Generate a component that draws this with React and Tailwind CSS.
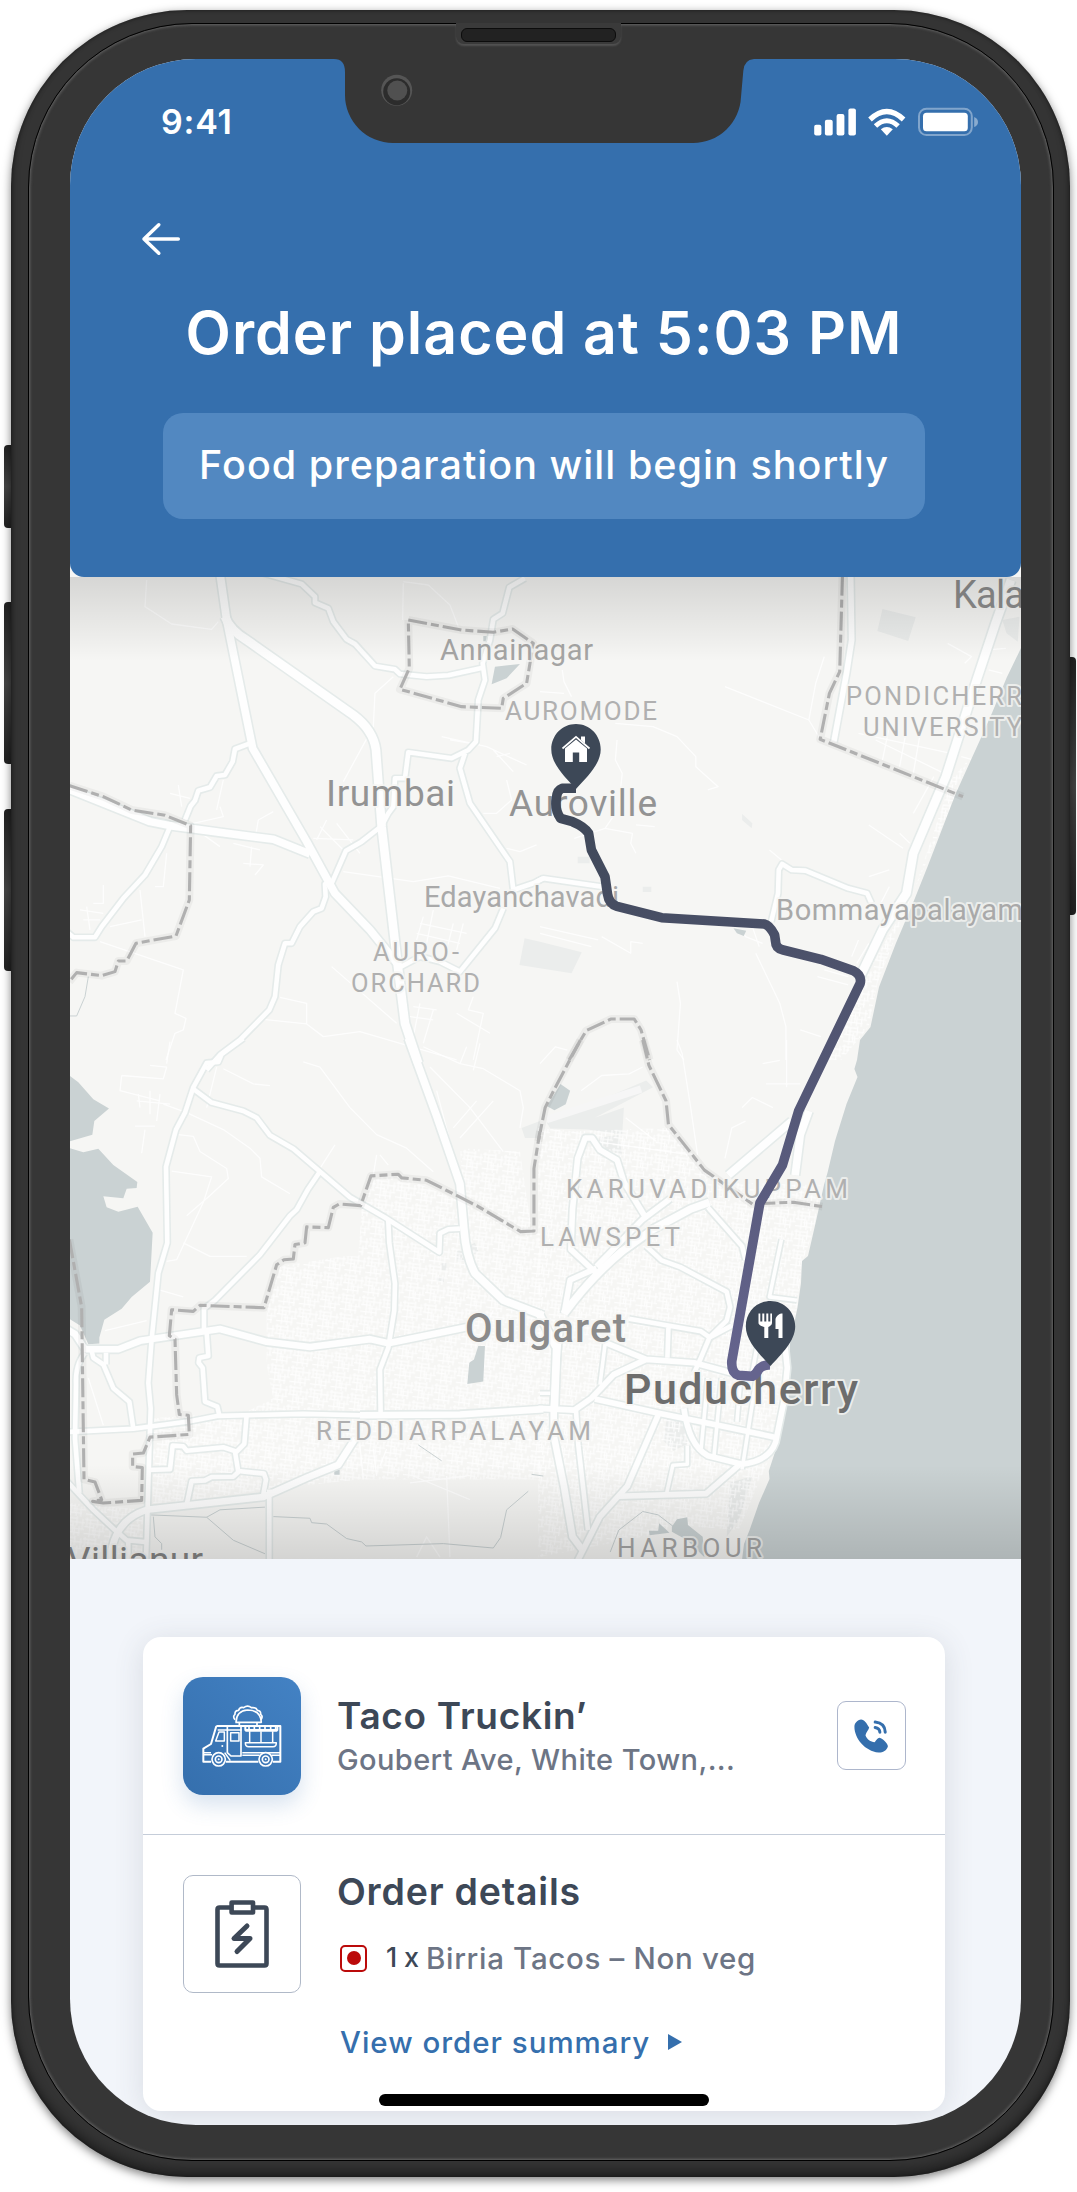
import React from "react";

/* ---------- Map data: four tiles, each with its own drawing units ---------- */

const TILES = {
  nw: "translate(60 560) scale(0.3333 0.3333)",
  ne: "translate(540 560) scale(0.3425 0.3333)",
  sw: "translate(60 1040) scale(0.3333 0.338)",
  se: "translate(540 1040) scale(0.3425 0.338)",
};

// [tile, width, path]
const ROADS = [
  // north west
  ["nw", 8, "M480 40 L500 180 L578 565 L740 845 L825 1000 L930 1110 L1015 1215"],
  ["nw", 9, "M495 170 Q510 210 560 240 L880 465 Q940 510 948 570 L965 800 L1010 1190 L1035 1390 L1075 1510"],
  ["nw", 5, "M610 40 L725 72 L765 110 L765 128 L805 145 L820 185 L860 238 L885 252 L945 318 L1005 328 L1020 342 L1100 350 L1165 346 L1265 324"],
  ["nw", 5, "M1395 55 L1348 82 L1328 160 L1300 178 L1290 240 L1268 310 L1275 360 L1255 420 L1248 545 L1225 570 L1175 595 L1045 577 L1035 655 L1005 655 L1000 740 L985 760 L965 798 L905 845 L858 872 L815 970 L795 972 L797 1010 L785 1045 L760 1055 L720 1100 L695 1150 L675 1150 L655 1215 L645 1310 L628 1350 L540 1440 L480 1485 L440 1530"],
  ["nw", 5, "M1215 580 L1200 625 L1230 730 L1350 905 L1360 990 L1420 970 L1450 955"],
  ["nw", 5, "M1330 1045 L1305 1105 L1200 1235 L1140 1205 L1080 1190 L1020 1222"],
  ["nw", 5, "M570 550 L525 567 L518 605 L495 645 L470 648 L450 682 L415 692 L405 722 L392 738 L375 780"],
  ["nw", 8, "M20 685 L270 785 L330 797 L500 820 L640 838 L750 882"],
  ["nw", 5, "M330 800 L305 860 L255 945 L190 1015 L125 1100 L105 1132 L40 1132 L20 1115"],
  // north east
  ["ne", 6, "M907 40 L910 240 L895 340 L858 545"],
  ["ne", 9, "M1375 60 L1330 190 L1275 360 L1185 650 L1090 880 L1070 1000 L1000 1110 L930 1260"],
  ["ne", 5, "M675 1085 L695 1000 L697 930 L707 912 L735 930 L775 932 L900 985 L955 1000 L968 1030"],
  ["ne", 5, "M-10 965 L10 955 L180 980 L200 988"],
  // south west
  ["sw", 5, "M550 -5 L485 42 L475 65 L440 68 L400 140 L375 215 L348 265 L318 375 L322 600 L295 690 L275 885 L265 1015 L272 1090 L258 1540"],
  ["sw", 5, "M400 145 L455 185 L550 210 L590 230 L630 282 L700 322 L870 465 L975 525 L1138 628 L1140 572 L1165 560 L1200 558"],
  ["sw", 5, "M778 392 L745 440 L710 502 L690 520 L600 635 L465 770 L432 795 L432 860"],
  ["sw", 8, "M1045 -5 L1130 225 L1200 425 L1212 560 Q1218 640 1245 690 L1330 770 L1450 815"],
  ["sw", 7, "M20 855 L45 870 L75 915 L175 915 L240 890 L480 855 L620 893 L750 908 L930 885 L985 897 L1220 850"],
  ["sw", 5, "M985 535 L988 600 L1005 720 L1003 800 L985 910 L960 975 L962 1105"],
  ["sw", 5, "M20 1160 L220 1150 L390 1128 L475 1112 L730 1106 L900 1110"],
  ["sw", 7, "M900 1110 L1200 1108 L1450 1092"],
  ["sw", 5, "M440 865 L445 935 L418 940 L416 955 L428 970 L435 1070 L472 1085 L478 1110"],
  ["sw", 5, "M95 920 L100 940 L130 960 L160 1030 L208 1070 L220 1150 M138 925 L138 960"],
  ["sw", 5, "M75 925 Q45 960 48 1020 L45 1180 L58 1340"],
  ["sw", 5, "M20 1305 L100 1390 L165 1450 L200 1480 L255 1485 M205 1480 L205 1540"],
  ["sw", 7, "M150 1540 Q160 1420 260 1390 L610 1352 L740 1295 L835 1257 L885 1180"],
  ["sw", 5, "M560 1110 L553 1195 L530 1218 L490 1205 L380 1215 L370 1202 L338 1200 L330 1270 L262 1272"],
  ["sw", 5, "M525 1218 L535 1278 L520 1292 L455 1293 L435 1303 L395 1305 L380 1375 M535 1275 L612 1283 L618 1300 L610 1345 M628 1330 L628 1540"],
  // south east
  ["se", 8, "M-5 805 L45 905 L50 870 L42 1090 M70 810 Q150 700 240 625 L330 560 L440 500 L495 480"],
  ["se", 6, "M70 810 L88 710 L165 675 M165 690 L90 620 L95 500 L110 350 L132 290 L152 290 L175 325 L225 355 L245 420 L305 520 M165 670 L300 530 L380 470"],
  ["se", 8, "M550 400 L735 240 M785 210 L760 280 L745 400"],
  ["se", 5, "M490 495 L590 610 L600 650 M310 610 L355 652 L410 672 L545 745 L555 790 L545 830 L495 880 L470 940 L450 985"],
  ["se", 7, "M60 830 L50 920 L40 1095 L40 1170 L70 1320 L95 1470 L125 1510"],
  ["se", 5, "M105 1095 L112 1200 L140 1450"],
  ["se", 5, "M260 825 L470 862 L495 880 L560 845 M375 850 L372 940"],
  ["se", 6, "M190 895 L310 945 L450 955 L560 985 M310 945 L215 990 L150 1060 L100 1095 L-5 1090"],
  ["se", 6, "M160 1062 L350 1105 L520 1140 L685 1175"],
  ["se", 6, "M345 1110 L255 1320 L175 1410 L110 1540"],
  ["se", 6, "M230 1350 L485 1342 L590 1250"],
  ["se", 6, "M420 1090 Q435 1200 490 1230 L590 1255 Q670 1245 688 1190 L712 1070 L722 970 L715 900"],
  ["se", 4, "M430 1200 L430 1255 L388 1258 L370 1340 M490 1000 L470 1215 M530 1000 L508 1230 M630 1010 L590 1270 M585 1010 L575 1130"],
  ["se", 4, "M705 590 L670 760 L750 770 M640 870 L615 1010 M190 900 L175 1020 M0 1045 L30 1045"],
];

const BOUNDARIES = [
  ["nw", "M1045 180 L1205 210 L1300 217 L1358 207 L1420 250 L1400 370 L1330 415 L1325 445 L1205 440 L1020 388 L1048 325 L1045 180"],
  ["nw", "M28 677 L130 710 L215 750 L315 766 L392 797 L388 1020 L348 1128 L228 1150 L200 1203 L175 1203 L165 1235 L125 1247 L50 1238 L28 1265"],
  ["ne", "M883 50 L875 335 L845 400 L818 538 L1235 710"],
  ["ne", "M85 1500 L135 1412 L208 1377 L275 1377 L295 1410 L320 1500"],
  ["sw", "M28 590 L65 790 L72 1300 L105 1308 L125 1360 L98 1365 L130 1370 L245 1362 L247 1265 L218 1262 L218 1225 L250 1222 L270 1175 L388 1167 L385 1110 L358 1108 L350 1050 L345 885 L328 875 L335 798 L400 803 L420 785 L612 792 L650 665 L672 650 L700 648 L705 605 L735 600 L740 553 L805 555 L820 495 L838 485 L902 490 L933 402 L1015 397 L1025 408 L1100 415 L1250 490 L1382 567 L1422 565 L1422 380 L1440 270"],
  ["se", "M118 0 L50 130 L15 200 L-5 300"],
  ["se", "M300 0 L318 75 L368 180 L375 250 L480 385 L620 485 L740 480 L825 493"],
];

const LAKES = [
  ["nw", "M1305 320 L1380 312 L1340 355 L1295 373 Z M1270 228 h14 v16 h-14 Z"],
  ["sw", "M28 105 L55 125 L100 175 L147 203 L103 240 L97 280 L28 300 Z"],
  ["sw", "M28 320 L70 332 L115 322 L160 370 L232 420 L230 438 L200 440 L190 468 L130 462 L140 495 L175 508 L233 493 L278 570 L270 715 L215 760 L185 795 L133 828 L118 880 L118 898 L85 900 L60 845 L28 825 Z"],
  ["sw", "M1255 905 L1275 905 L1270 1010 L1222 1018 L1228 955 L1242 945 Z M823 1272 h16 v14 h-16 Z"],
  ["se", "M60 130 L88 150 L75 190 L42 208 L20 195 Z"],
  ["se", "M385 1440 L400 1418 L430 1412 L432 1435 L475 1470 L480 1530 L430 1480 L385 1455 Z M318 1452 L345 1452 L348 1430 L378 1458 L320 1465 Z"],
  ["ne", "M565 1105 L602 1112 L595 1128 L575 1120 Z"],
];

const GROUNDS = [
  ["ne", "M1000 147 L1097 172 L1075 243 L985 213 Z M1350 180 L1400 170 L1395 245 L1362 220 Z"],
  ["ne", "M0 1145 L122 1177 L92 1240 L-60 1215 L-45 1135 Z M590 762 L620 790 L618 805 L590 780 Z M110 890 h35 v20 h-35 Z M300 980 h25 v16 h-25 Z"],
  ["se", "M20 245 L310 120 L330 140 L160 230 L245 200 L240 280 L140 265 L30 262 Z"],
  ["se", "M370 1120 L415 1120 L430 1195 L390 1215 L360 1185 Z M555 1310 L620 1290 L580 1420 L545 1470 Z M170 290 L230 280 L240 340 L180 320 Z"],
  ["sw", "M1190 625 L1245 600 L1255 625 L1215 655 L1190 655 Z M1145 660 h14 v22 h-14 Z M1130 702 h22 v14 h-22 Z M1385 260 L1440 240 L1440 290 L1395 290 Z"],
];

const LANES = [
  ["nw", "M260 60 L255 140 L335 192 L455 208 L475 185 M1030 65 L1105 75 L1170 135 L1195 200 M1030 70 L1028 180 M1000 350 L945 400 L940 500 L850 665 M850 935 L1060 965 L1165 948 L1320 985"],
  ["nw", "M120 1145 L370 1230 L345 1360 L378 1375 L370 1410 L345 1420 L318 1500 M610 1378 L740 1392 L740 1330 L660 1312 M740 1392 L790 1430 L900 1415 L1190 1500 M815 1220 L1010 1390"],
  ["nw", "M330 700 L390 715 M355 675 L365 740 M400 790 L490 770 L480 740 M410 810 L480 860 M490 660 L470 750 M520 850 L600 870 M585 840 L595 780 L640 755 M550 910 L610 915 L585 945 M575 860 L570 920"],
  ["nw", "M760 835 L880 840 M780 800 L850 870 M800 780 L770 840 M830 790 L900 880 M60 1050 L130 1060 M70 1080 L120 1080 M80 1040 L90 1110 M130 975 L130 1030 L100 1030 M150 1100 L245 1080 M240 990 L255 1130 M320 880 L310 980 L285 980"],
  ["nw", "M1145 530 L1280 560 L1400 615 M1170 540 L1260 555 M1300 570 L1360 635 M1310 590 L1350 580 M1270 760 L1310 760 L1355 720 L1340 660 M1340 865 L1380 875 L1430 855"],
  ["nw", "M1080 1090 L1220 1120 M1070 1120 L1200 1150 M1090 1070 L1070 1140 M1120 1050 L1100 1150 M1180 1090 L1160 1170 M1210 1090 L1190 1170 M1060 1340 L1130 1350 M1050 1370 L1120 1380 M1080 1330 L1060 1430 M1120 1350 L1090 1450 M1190 1360 L1290 1420 M1240 1310 L1225 1350 L1270 1360 L1240 1500"],
  ["ne", "M65 330 L70 365 L92 410 M0 395 L70 400 M830 290 L805 370 L785 480 L820 540 M540 380 L650 425 L785 480 M220 490 L330 500 L400 530 L455 590 L455 620 L520 680 L490 690 M225 540 L220 600 L240 640 L230 740"],
  ["ne", "M100 835 L190 805 L270 820 L265 850 L280 880 M190 805 L220 760 M280 795 L335 800 M670 870 L705 900 M960 795 L1060 865 M1050 820 L1080 850 M400 1265 L410 1330 L400 1470 L420 1500 M630 1180 L700 1330 L718 1400 L718 1500"],
  ["ne", "M0 1100 L170 1140 M0 1120 L150 1160 M180 1130 L265 1180 L265 1145 L300 1150 M590 1110 L600 1130 L650 1150 M620 1100 L640 1160 M810 1250 L900 1275 M830 1230 L900 1250 M910 1190 L930 1140 M925 1210 L960 1150 M990 1040 L1020 980 M960 950 L1020 930"],
  ["ne", "M930 520 L1200 580 M980 540 L1180 640 M1020 500 L1000 600 M1070 510 L1050 620 M1110 520 L1090 640 M1190 250 L1260 290 L1240 310 M1300 270 L1360 265 M1310 330 L1350 340 M1090 760 L1150 650 M1130 740 L1180 660 M1230 590 L1265 600 M760 1410 L820 1430"],
  ["sw", "M330 5 L320 70 M185 105 L310 115 L320 80 L270 75 M185 105 L180 150 L300 180 M230 180 L330 190 M235 160 L240 200 M270 150 L270 220 M300 160 L290 240 M225 255 L285 255 M255 265 L245 335 M310 190 L380 215 L490 265 L570 320 L600 350 L605 405 L690 455"],
  ["sw", "M470 80 L440 200 M490 85 L580 130 L630 135 M355 280 L400 285 L420 330 L500 380 L505 410 L450 460 L380 520 M335 388 L455 405 L430 480 L350 650 L320 655 M370 600 L450 640 L560 640 M730 65 L780 80 L870 200 L950 280 L1040 320 L1120 390"],
  ["sw", "M1090 20 L1200 70 L1270 85 L1380 150 L1390 200 L1380 260 M1220 20 L1200 70 M1260 10 L1240 90 M1110 80 L1230 200 L1330 330 M1130 150 L1170 300 M1180 260 L1250 180 M1200 290 L1300 180 M825 310 L780 380 M950 340 L940 400 M960 340 L985 370 M300 740 L370 760 M135 860 L260 830 M85 1000 L130 1140"],
  ["sw", "M1060 1290 L1230 1360 M1050 1310 L1220 1290 M1160 1290 L1170 1530 M900 1200 L910 1300 M940 1210 L950 1290 M980 1210 L960 1260 M1070 1530 L1100 1470 L1140 1530 M1300 800 L1250 900"],
  ["se", "M0 70 L45 20 L80 30 M120 150 L180 105 L260 100 L300 80 M400 0 L415 40 L440 200 L460 340 M540 350 L560 260 L600 240 M650 70 L700 60 M720 0 L720 140 M660 130 L760 130 M590 200 L620 170 L680 200 M160 300 L440 340 M250 230 L340 300"],
];

const CREEKS = [
  ["sw", "M270 1405 L440 1412 L520 1480 L615 1520 M440 1412 L480 1390 L615 1382 M640 1410 L750 1415 L755 1428 L800 1432 L860 1475 L905 1485 L918 1497 L1150 1490 L1300 1503 L1322 1472 L1340 1390 L1405 1335 M280 1410 L285 1470 L305 1490 L305 1508 M1075 1198 L1145 1245 M1415 1285 L1450 1290"],
  ["se", "M205 1515 L230 1450 L300 1395 L345 1405 L390 1440"],
  ["nw", "M85 1250 L75 1310 L50 1368 L30 1368"],
];

const URBAN = [
  ["sw", "M620 790 L660 670 L850 640 L895 640 L905 500 L935 410 L1015 400 L1230 490 L1440 560 L1440 1300 L900 1300 L620 1330 L340 1370 L280 1370 L270 1120 L560 1100 L640 1060 L620 960 Z M1200 320 L1380 330 L1415 560 L1390 560 L1210 460 Z M28 1370 L250 1390 L250 1530 L28 1530 Z"],
  ["se", "M-5 260 L100 270 L375 260 L520 420 L820 430 L800 560 L765 660 L740 880 L725 1000 L690 1190 L660 1260 L580 1450 L450 1440 L-5 1530 Z"],
  ["ne", "M930 1300 L960 1230 L1090 1000 L1200 660 L1250 600 L1200 740 L1080 1020 L985 1270 L960 1400 L880 1500 L830 1500 Z"],
];

const ROUTE =
  "M576 788.3 L562.3 788.3 Q557 790 556.4 798.3 Q554.4 810 560.6 818.3 L572.5 821.7 Q584.5 826.7 588.6 833.3 L591.4 850 L605 876.7 L607.5 894 Q609 904 617 906.3 L661.6 917.7 L764.3 924 Q769.5 925 774.6 935 L775.6 941.7 Q775.6 948.3 783.2 950 L820.9 959.3 L853.4 970.7 Q862 975 860.2 983.3 L798.6 1111 L782.5 1165 L759.9 1203 L731.8 1361 Q731 1373 738.7 1375.3 L752.4 1376.3 Q755.8 1374.6 758.5 1369.6 Q762.6 1364.5 770.2 1365";

// [text, x, baseline, drawn length, size, colour, weight]
const LABELS = [
  ["Annainagar", 440, 660, 153, 29, "#a5a5a4", 400],
  ["AUROMODE", 505, 720, 152, 26, "#b0b0b0", 400],
  ["Irumbai", 326, 806, 129, 37, "#939393", 400],
  ["Auroville", 509, 816, 148, 37, "#939393", 400],
  ["Edayanchavadi", 424, 906.5, 195, 29, "#a9a9a9", 400],
  ["AURO-", 373, 961, 86, 25.5, "#b0b0b0", 400],
  ["ORCHARD", 351, 992, 129, 25.5, "#b0b0b0", 400],
  ["Bommayapalayam", 776, 920, 247, 29, "#a9a9a9", 400],
  ["PONDICHERR", 846, 704.5, 176, 25.5, "#b0b0b0", 400],
  ["UNIVERSITY", 863, 736, 159, 25.5, "#b0b0b0", 400],
  ["Kala", 953, 608, 72, 38, "#8d8d8d", 400],
  ["KARUVADIKUPPAM", 566, 1198, 282, 26, "#b0b0b0", 400],
  ["LAWSPET", 540, 1246, 140, 26, "#b0b0b0", 400],
  ["Oulgaret", 465, 1341.5, 161, 40, "#8b8b8b", 500],
  ["Puducherry", 624, 1403.5, 234, 43, "#6d6d6d", 500],
  ["REDDIARPALAYAM", 316, 1440, 275, 26, "#b0b0b0", 400],
  ["HARBOUR", 617, 1556.5, 145, 26, "#a5a5a5", 400],
  ["Villianur", 67, 1572.5, 136, 37, "#858585", 400],
];

function Strokes({ items, color, width, opacity = 1, dash, extra = 0 }) {
  return items.map((item, i) => {
    const d = item[item.length - 1];
    const w = item.length === 3 ? item[1] + extra : width;
    return (
      <g key={i} transform={TILES[item[0]]}>
        <path
          d={d}
          fill="none"
          stroke={color}
          strokeWidth={w}
          strokeOpacity={opacity}
          strokeDasharray={dash}
          strokeLinejoin="round"
          vectorEffect="non-scaling-stroke"
        />
      </g>
    );
  });
}

function Areas({ items, fill }) {
  return items.map(([tile, d], i) => (
    <g key={i} transform={TILES[tile]}>
      <path d={d} fill={fill} />
    </g>
  ));
}

function Pin({ x, y, children }) {
  return (
    <g transform={`translate(${x} ${y})`}>
      <path d="M0 0 C13.600 0 24.700 11 24.700 25.500 C24.700 40 11 53 0 65 C-11 53 -24.700 40 -24.700 25.500 C-24.700 11 -13.600 0 0 0 Z" fill="#3d4857" />
      {children}
    </g>
  );
}

function DeliveryMap() {
  return (
    <svg viewBox="70 563 951 996" className="block h-full w-full">
      <defs>
        <linearGradient id="route" gradientUnits="userSpaceOnUse" x1="600" y1="800" x2="740" y2="1370">
          <stop offset="0" stopColor="#3f4858" />
          <stop offset="1" stopColor="#65648e" />
        </linearGradient>
        <linearGradient id="shadeTop" x1="0" y1="0" x2="0" y2="1">
          <stop offset="0" stopColor="#000" stopOpacity="0.13" />
          <stop offset="1" stopColor="#000" stopOpacity="0" />
        </linearGradient>
        <linearGradient id="shadeBottom" x1="0" y1="0" x2="0" y2="1">
          <stop offset="0" stopColor="#000" stopOpacity="0" />
          <stop offset="1" stopColor="#000" stopOpacity="0.14" />
        </linearGradient>
        <pattern id="streets" width="62" height="58" patternUnits="userSpaceOnUse" patternTransform="rotate(7)">
          <path
            d="M0 6 H40 M10 17 H62 M0 28 H30 M22 37 H62 M0 48 H50 M6 0 V30 M17 6 V58 M27 20 V48 M38 0 V28 M47 28 V58 M56 6 V37 M33 28 V58"
            fill="none"
            stroke="#fff"
            strokeWidth="3.4"
            strokeOpacity="0.85"
          />
        </pattern>
      </defs>
      <rect x="70" y="560" width="951" height="1000" fill="#f6f6f4" />
      <Areas items={GROUNDS} fill="#ebedec" />
      <Areas items={URBAN} fill="url(#streets)" />
      <Strokes items={LANES} color="#fff" width={1.3} opacity={0.8} />
      <path
        d="M1022 646 L1006.500 678 L992 713 L980 740 L956 793 L927 868 L913 903 L896 943 L879 987 L870.500 1027 L860 1040 L857 1060 L854.400 1069 L857.500 1077 L846.500 1104 L835 1141 L827.700 1172 L824 1185 L815.700 1222.500 L808 1256 L802 1261 L801 1283 L797.600 1307 L790 1344 L790 1373 L784 1408 L776 1449 L768.800 1471 L769.500 1479 L759 1503 L749.600 1530 L744 1544 L742 1560 L1022 1560 Z"
        fill="#cad2d3"
      />
      <Areas items={LAKES} fill="#cad2d3" />
      <Strokes items={CREEKS} color="#cad2d3" width={1} />
      <Strokes items={ROADS} color="#e5ebea" extra={2.8} />
      <Strokes items={ROADS} color="#fefefe" extra={-0.4} />
      <g transform={TILES.se}>
        <path d="M20 235 L295 145" stroke="#f6f6f6" strokeWidth="22" />
      </g>
      <Strokes items={BOUNDARIES} color="#000" width={8} opacity={0.04} />
      <Strokes items={BOUNDARIES} color="#b0b0b0" width={3.1} dash="19 4 8 4" />
      <g fontFamily="Roboto, sans-serif">
        {LABELS.map(([text, x, y, len, size, color, weight]) => (
          <text
            key={text}
            x={x}
            y={y}
            textLength={len}
            lengthAdjust="spacing"
            fontSize={size}
            fontWeight={weight}
            fill={color}
            stroke="#f6f6f4"
            strokeWidth="4"
            strokeOpacity="0.75"
            strokeLinejoin="round"
            paintOrder="stroke"
          >
            {text}
          </text>
        ))}
      </g>
      <rect x="70" y="577" width="951" height="84" fill="url(#shadeTop)" />
      <rect x="70" y="1465" width="951" height="95" fill="url(#shadeBottom)" />
      <Pin x={576} y={724}>
        <g fill="#fff">
          <path d="M-11 24.500 L0 15.500 L11 24.500 V38 H3.200 V28.500 H-3.200 V38 H-11 Z" />
          <path d="M5 12.500 h4 v7 l-4 -3.500 Z" />
          <path d="M-13.500 24.500 L0 12.800 L13.500 24.500" fill="none" stroke="#fff" strokeWidth="1.700" />
        </g>
      </Pin>
      <path d={ROUTE} fill="none" stroke="url(#route)" strokeWidth="9.6" strokeLinejoin="round" />
      <Pin x={770.5} y={1301}>
        <g fill="#fff">
          <path d="M-12 12.500 h1.800 v8 h2 v-8 h2 v8 h2 v-8 h2 v8 h2 v-8 h1.700 v9.500 c0 2 -2.500 3.500 -3.700 4 V37 h-4 V26 c-2 -0.500 -5.800 -2 -5.800 -4 Z" />
          <path d="M12 12.500 V37 H8 V28 H5 V18 C6 14.500 9 12.500 12 12.500 Z" />
        </g>
      </Pin>
    </svg>
  );
}

/* ------------------------------- Icons ------------------------------- */

function StatusIcons() {
  return (
    <svg viewBox="814 105 165 32" className="h-8 w-[165px]">
      <g fill="#fff">
        <rect x="814.200" y="123.700" width="7.200" height="10.900" rx="2" />
        <rect x="824.900" y="118.700" width="7.800" height="15.900" rx="2" />
        <rect x="836.600" y="113" width="7.800" height="21.600" rx="2" />
        <rect x="848.400" y="107.500" width="7.500" height="27.100" rx="2" />
        <rect x="923" y="111.700" width="44.800" height="18.500" rx="3.500" />
        <path d="M886.800 134.800 L880.800 128.300 Q886.800 123.800 892.800 128.300 Z" />
      </g>
      <path d="M870 118.500 Q886.800 102.500 903.600 118.500" fill="none" stroke="#fff" strokeWidth="5.200" />
      <path d="M875.500 125 Q886.800 114.500 898.100 125" fill="none" stroke="#fff" strokeWidth="5" />
      <rect x="919" y="107.700" width="52.800" height="26.400" rx="7.500" fill="none" stroke="#fff" strokeOpacity="0.380" strokeWidth="2" />
      <path d="M974.200 116 Q978 117.500 978 121 Q978 124.500 974.200 126 Z" fill="#fff" fillOpacity="0.420" />
    </svg>
  );
}

function BackArrow() {
  return (
    <svg viewBox="0 0 40 40" className="size-10" fill="none" stroke="#fff" strokeWidth="3.500" strokeLinecap="round" strokeLinejoin="round">
      <path d="M37.300 20 H3 M17.800 5.800 L3 20 L17.800 34.200" />
    </svg>
  );
}

function TacoTruck() {
  return (
    <svg viewBox="158 169 354 354" className="size-full" fill="none" stroke="#fff" strokeWidth="6" strokeLinejoin="round">
      {/* body */}
      <path d="M258 316 H450 V423 H428 M384 423 H287 M242 423 H219 V384 L242 370 L258 316" />
      <path d="M262 328 H334 M219 402 H245 M283 396 L300 420 M336 396 H450 M336 404 H388 M424 404 H450 M219 396 H242" strokeWidth="4.500" />
      {/* cab windows */}
      <path d="M266 334 H282 V361 H256 Z M301 336 H326 V361 H301 Z" strokeWidth="4.500" />
      <path d="M291 318 V396 L302 406 H332 V318" strokeWidth="5" />
      <circle cx="276" cy="376" r="3" fill="#fff" stroke="none" />
      {/* awning */}
      <path d="M345 318 V328 H441 V318 M345 330 H441" />
      <path d="M356 318 V330 M372 318 V330 M388 318 V330 M404 318 V330 M421 318 V330 M436 318 V330" strokeWidth="5" />
      <path d="M358 332 V366 M392 332 V366 M427 332 V366" strokeWidth="4.500" />
      <path d="M345 366 H438 Q438 378 428 378 H355 Q345 378 345 366 Z" strokeWidth="4.500" />
      {/* roof taco */}
      <path d="M327 316 V306 M380 316 V306 M315 305 H393 Q391 268 352 268 Q318 270 317 305" strokeWidth="5" />
      <path d="M314 297 Q306 287 314 281 Q313 269 325 269 Q328 258 340 261 Q352 252 363 261 Q378 259 381 269 Q392 270 391 281 Q399 287 392 297" strokeWidth="5" />
      {/* wheels */}
      {[265, 406].map((cx) => (
        <g key={cx}>
          <circle cx={cx} cy="416" r="20" fill="#3b76b7" strokeWidth="5" />
          <circle cx={cx} cy="416" r="10" strokeWidth="5" />
          <circle cx={cx} cy="416" r="3" fill="#fff" stroke="none" />
        </g>
      ))}
    </svg>
  );
}

function CallIcon() {
  return (
    <svg viewBox="831 243 206 206" className="size-[69px] shrink-0">
      <path
        d="M903 298 C913 298 919 309 927 322 C926 330 918 335 916 345 C920 357 932 365 943 366 C948 363 950 354 958 353 C968 356 982 369 983 378 C980 392 965 398 955 397 C915 393 883 355 883 320 C883 308 892 300 903 298 Z"
        fill="#356fad"
      />
      <path d="M945 306 Q974 309 975 336 M945 322 Q958 324 959 336" fill="none" stroke="#356fad" strokeWidth="9" strokeLinecap="round" />
    </svg>
  );
}

function ClipboardIcon() {
  return (
    <svg viewBox="0 0 54 68" className="h-[68px] w-[54px]" fill="none" stroke="#3d4857" strokeWidth="4.600" strokeLinejoin="round">
      <path d="M15 7.500 H4.500 Q2.500 7.500 2.500 9.500 V63.500 Q2.500 65.500 4.500 65.500 H49.500 Q51.500 65.500 51.500 63.500 V9.500 Q51.500 7.500 49.500 7.500 H39" />
      <rect x="16.600" y="2.500" width="21.400" height="10" />
      <path d="M32 26 L19 38.500 H35 L22 51.500" strokeWidth="5" strokeLinecap="round" />
    </svg>
  );
}

/* ------------------------------ Sections ------------------------------ */

function Header() {
  return (
    <header className="relative z-10 flex h-[518px] shrink-0 flex-col rounded-b-[14px] bg-[#356fad] text-white">
      <div className="flex h-[126px] items-center justify-between pr-[42px] pl-[91px]">
        <span className="text-[34px] leading-none font-semibold tracking-[0.8px]">9:41</span>
        <StatusIcons />
      </div>
      <div className="mt-[34px] pl-[71px]">
        <BackArrow />
      </div>
      <div className="flex flex-col items-center pr-[3px]">
        <h1 className="mt-[39px] text-[59px] leading-[70px] font-semibold tracking-[1px] whitespace-nowrap">
          Order placed at 5:03 PM
        </h1>
        <p className="mt-[45px] flex h-[106px] w-[762px] items-center justify-center rounded-[20px] bg-[#5288c1] text-[39.5px] font-medium tracking-[1.03px] whitespace-nowrap">
          Food preparation will begin shortly
        </p>
      </div>
    </header>
  );
}

function Vendor() {
  return (
    <section className="flex h-[198px] items-center border-b border-[#c5cdd9] pr-[39px] pl-10">
      <div className="size-[118px] shrink-0 rounded-[20px] bg-linear-to-bl from-[#4382c4] to-[#356fad] shadow-[0_10px_22px_rgba(53,111,173,0.2)]">
        <TacoTruck />
      </div>
      <div className="ml-9 grow">
        <h2 className="text-[37px] leading-[44px] font-semibold tracking-[0.7px] text-[#3d4857]">Taco Truckin’</h2>
        <p className="mt-1 text-[29px] leading-9 font-medium tracking-[0.4px] text-[#6d7585]">Goubert Ave, White Town,...</p>
      </div>
      <button className="flex size-[69px] shrink-0 items-center justify-center rounded-[9px] border border-[#adb6cc]">
        <CallIcon />
      </button>
    </section>
  );
}

function OrderDetails() {
  return (
    <section className="flex items-start pt-[35px] pl-10">
      <div className="mt-[5px] flex size-[118px] shrink-0 items-center justify-center rounded-[10px] border border-[#b0b9c8]">
        <ClipboardIcon />
      </div>
      <div className="ml-9">
        <h2 className="text-[37.5px] leading-[44px] font-semibold tracking-[0.8px] text-[#3d4857]">Order details</h2>
        <div className="mt-[26px] flex items-center pl-[3px] text-[29.5px] leading-9 font-medium whitespace-nowrap">
          <span className="flex size-[27px] items-center justify-center rounded-[5px] border-2 border-[#bb0a0a]">
            <span className="size-[14px] rounded-full bg-[#bb0a0a]" />
          </span>
          <span className="ml-[19px] w-10 text-[27px] tracking-[-0.2px] text-[#3d4857]">1 x</span>
          <span className="tracking-[0.67px] text-[#6d7585]">Birria Tacos – Non veg</span>
        </div>
        <a className="mt-12 flex items-center gap-[18px] pl-[3px] text-[29.5px] leading-9 font-medium tracking-[0.98px] whitespace-nowrap text-[#356fad]">
          View order summary
          <svg viewBox="0 0 14 16" className="h-4 w-[14px]" fill="#356fad">
            <path d="M0 0 L14 8 L0 16 Z" />
          </svg>
        </a>
      </div>
    </section>
  );
}

function SideButton({ className }) {
  return <div className={`absolute bg-linear-to-b from-[#222] via-[#444] to-[#222] ${className}`} />;
}

export default function App() {
  return (
    <main className="relative h-[2192px] w-[1077px] overflow-hidden bg-white pt-[10px] pl-[11px] font-['Inter',sans-serif]">
      <SideButton className="top-[445px] left-1 h-[83px] w-2 rounded-l-[4px]" />
      <SideButton className="top-[602px] left-1 h-[162px] w-2 rounded-l-[4px]" />
      <SideButton className="top-[809px] left-1 h-[162px] w-2 rounded-l-[4px]" />
      <SideButton className="top-[657px] left-[1068px] h-[258px] w-2 rounded-r-[4px]" />

      {/* metal frame */}
      <div className="relative h-[2167px] w-[1059px] rounded-[176px] bg-[#343434] pt-[13px] pl-[17px] shadow-[0_3px_10px_rgba(0,0,0,0.5),inset_0_-8px_10px_rgba(0,0,0,0.3),inset_0_0_4px_rgba(0,0,0,0.5)]">
        {/* glass */}
        <div className="relative h-[2138px] w-[1026px] rounded-[164px] border border-black bg-[#363636] pt-[35px] pl-[41px] shadow-[inset_0_0_3px_1px_#666]">
          <div className="absolute top-[-1px] left-[427px] h-[21px] w-[165px] rounded-b-[8px] bg-[#3a3a3a] shadow-[0_2px_2px_rgba(110,110,110,0.5)]">
            <div className="mx-auto mt-[5px] h-[14px] w-[155px] rounded-[6px] border border-[#0c0c0c] bg-[#222]" />
          </div>

          {/* display */}
          <div className="relative flex h-[2066px] w-[951px] flex-col overflow-hidden rounded-[126px] bg-[#f2f5fa]">
            <Header />
            <div className="mt-[-14px] h-[996px] shrink-0">
              <DeliveryMap />
            </div>
            <div className="mt-[78px] ml-[73px] h-[474px] w-[802px] shrink-0 rounded-[18px] bg-white shadow-[0_4px_30px_rgba(61,72,87,0.14)]">
              <Vendor />
              <OrderDetails />
            </div>
            <div className="absolute bottom-[19px] left-[309px] h-3 w-[330px] rounded-full bg-black" />
            <svg viewBox="334 59 420 85" className="absolute top-0 left-[264px] z-20 h-[85px] w-[420px]">
              <path d="M334 58 V59 Q345 59 345 72 V95 A48 48 0 0 0 393 143 H693 A48 48 0 0 0 741 97 L743.300 71 Q744 59 756 59 V58 Z" fill="#363636" />
              <circle cx="396.700" cy="90.300" r="15.500" fill="#555" />
              <circle cx="396.700" cy="91.800" r="13.500" fill="#2c2c2c" />
              <circle cx="397.300" cy="90.500" r="10" fill="#505050" />
            </svg>
          </div>
        </div>
      </div>
    </main>
  );
}
